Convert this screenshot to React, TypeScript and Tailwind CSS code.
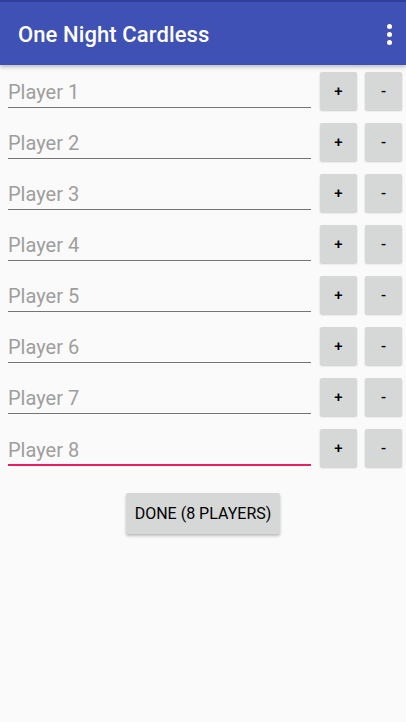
import { useState } from "react";

const font = { fontFamily: "Roboto, 'Noto Sans', sans-serif" };

const App = () => {
    const [players] = useState(["Player 1", "Player 2", "Player 3", "Player 4", "Player 5", "Player 6", "Player 7", "Player 8"]);

    return (
        <div className="w-[406px] h-[722px] bg-[#fafafa] flex flex-col" style={font}>
            {/* status strip + toolbar */}
            <div className="h-[2px] bg-[#303f9f]" />
            <header className="h-[63px] bg-[#3f51b5] flex items-center justify-between pl-[18px] pr-[14px] shadow-[0_2px_4px_rgba(0,0,0,0.25)] relative z-10">
                <h1 className="text-white text-[22px] font-medium tracking-[0.1px] mt-[2px]">One Night Cardless</h1>
                <div className="flex flex-col gap-[3px] items-center mt-[1px]">
                    <span className="w-[5px] h-[5px] rounded-full bg-white" />
                    <span className="w-[5px] h-[5px] rounded-full bg-white" />
                    <span className="w-[5px] h-[5px] rounded-full bg-white" />
                </div>
            </header>

            <main className="flex flex-col pt-[6px]">
                {players.map((name, i) => {
                    const focused = i === players.length - 1;
                    return (
                        <div key={name} className="h-[51px] flex items-start pl-[8px] pr-[4px]">
                            <div
                                className={
                                    focused
                                        ? "w-[303px] h-[38px] border-b-2 border-[#e91e63] flex items-end pb-[2px]"
                                        : "w-[303px] h-[37px] border-b border-[#757575] flex items-end pb-[3px]"
                                }
                            >
                                <span className="text-[20px] leading-[24px] text-[#9e9e9e]">{name}</span>
                            </div>
                            <button className="ml-[9px] mt-px w-[37px] h-[38px] rounded-[2px] bg-[#d6d7d7] shadow-[0_1px_2px_rgba(0,0,0,0.2)] text-[15px] font-medium text-black flex items-center justify-center">
                                +
                            </button>
                            <button className="ml-[8px] mt-px w-[37px] h-[38px] rounded-[2px] bg-[#d6d7d7] shadow-[0_1px_2px_rgba(0,0,0,0.2)] text-[15px] font-medium text-black flex items-center justify-center">
                                -
                            </button>
                        </div>
                    );
                })}

                <div className="flex justify-center mt-[14px]">
                    <button className="w-[154px] h-[41px] rounded-[2px] bg-[#d6d7d7] shadow-[0_2px_3px_rgba(0,0,0,0.25)] text-[16px] font-normal text-black uppercase">
                        Done (8 players)
                    </button>
                </div>
            </main>
        </div>
    );
};

export default App;
